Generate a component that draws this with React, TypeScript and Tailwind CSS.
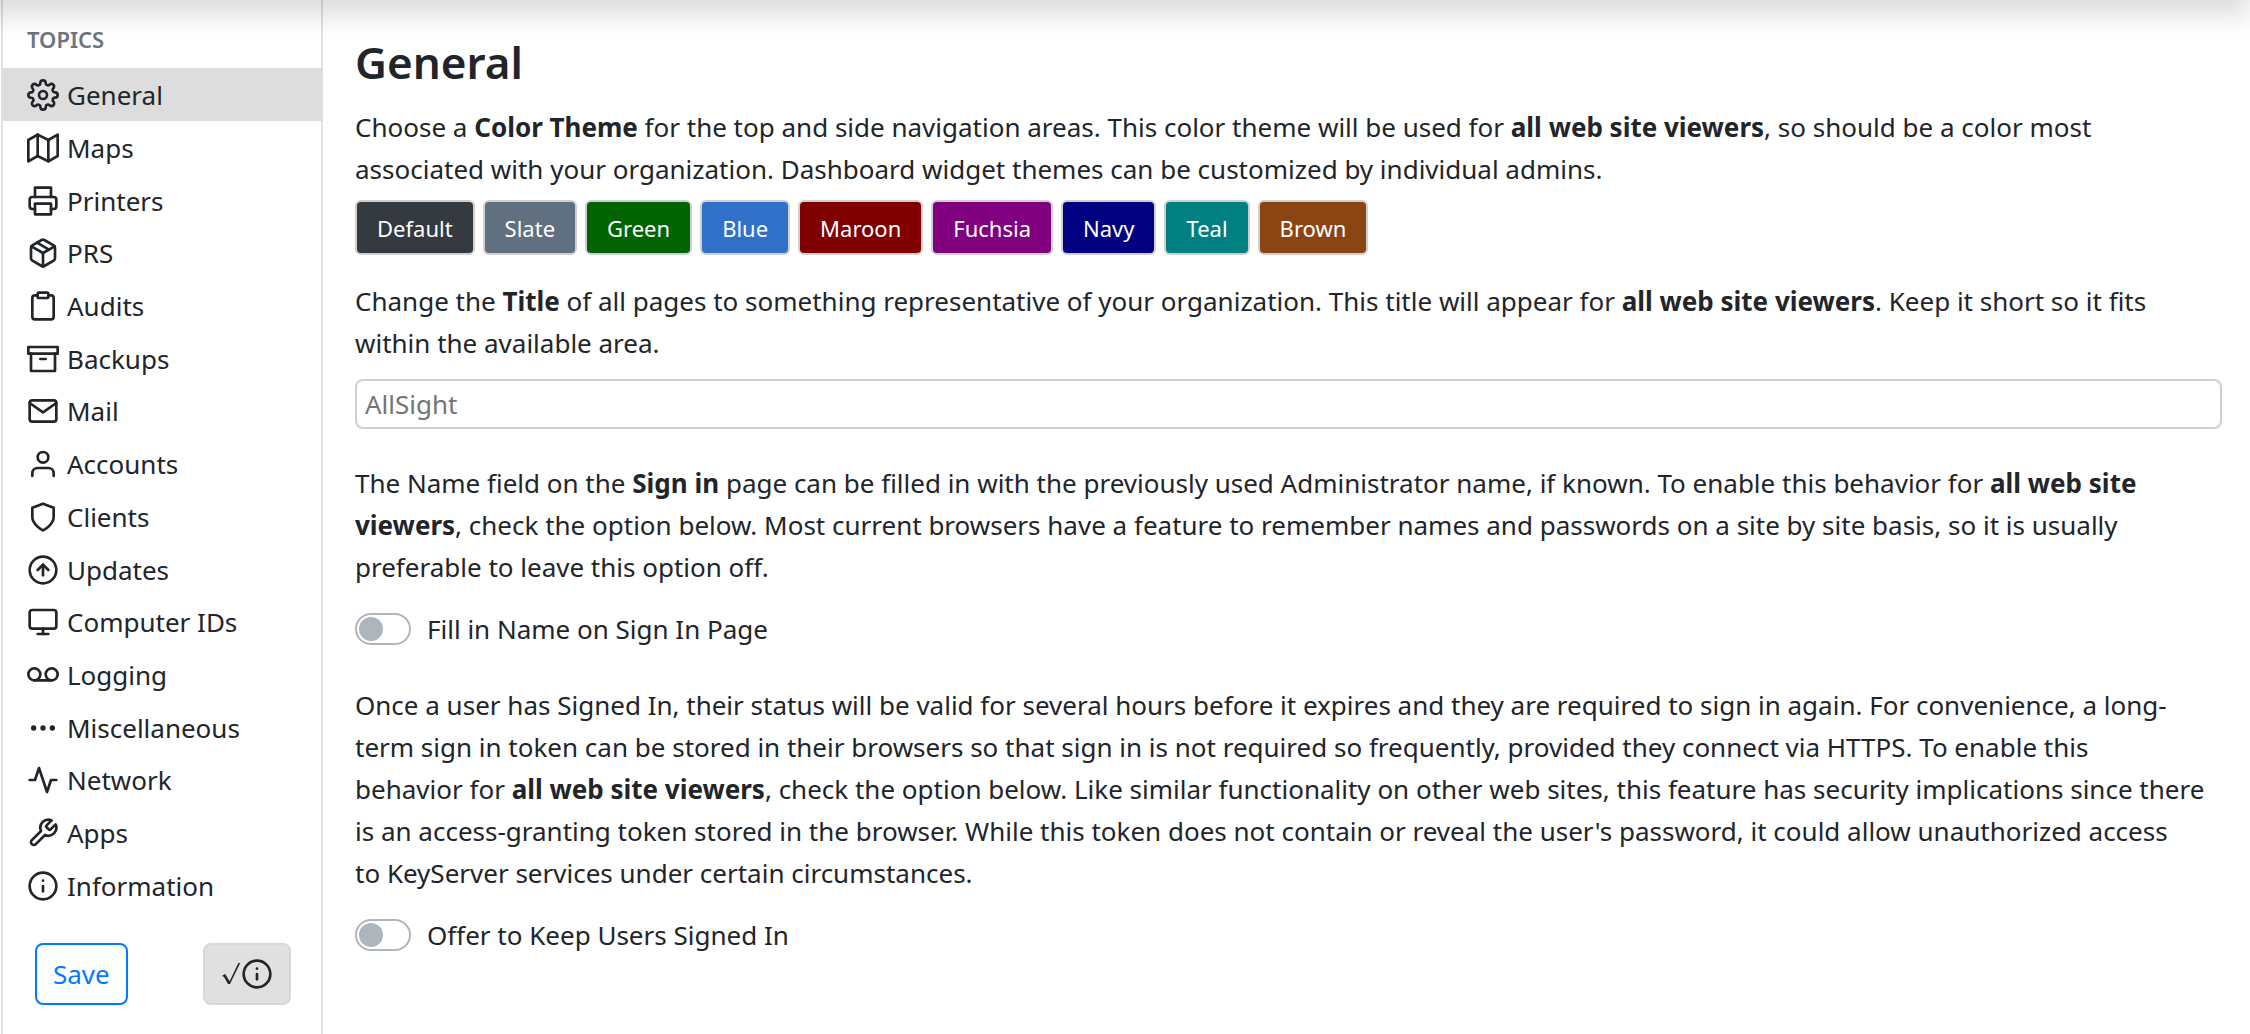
import { useState } from "react";
import type { ReactNode } from "react";
import type { IconType } from "react-icons";
import {
  FiActivity,
  FiArchive,
  FiArrowUpCircle,
  FiClipboard,
  FiInfo,
  FiMail,
  FiMap,
  FiMonitor,
  FiMoreHorizontal,
  FiPackage,
  FiPrinter,
  FiSettings,
  FiShield,
  FiTool,
  FiUser,
  FiVoicemail,
} from "react-icons/fi";
import clsx from "clsx";

const topics: { label: string; icon: IconType }[] = [
  { label: "General", icon: FiSettings },
  { label: "Maps", icon: FiMap },
  { label: "Printers", icon: FiPrinter },
  { label: "PRS", icon: FiPackage },
  { label: "Audits", icon: FiClipboard },
  { label: "Backups", icon: FiArchive },
  { label: "Mail", icon: FiMail },
  { label: "Accounts", icon: FiUser },
  { label: "Clients", icon: FiShield },
  { label: "Updates", icon: FiArrowUpCircle },
  { label: "Computer IDs", icon: FiMonitor },
  { label: "Logging", icon: FiVoicemail },
  { label: "Miscellaneous", icon: FiMoreHorizontal },
  { label: "Network", icon: FiActivity },
  { label: "Apps", icon: FiTool },
  { label: "Information", icon: FiInfo },
];

const themes = [
  { label: "Default", color: "bg-[#343a40]" },
  { label: "Slate", color: "bg-[#607080]" },
  { label: "Green", color: "bg-[#006400]" },
  { label: "Blue", color: "bg-[#3070c8]" },
  { label: "Maroon", color: "bg-[#800000]" },
  { label: "Fuchsia", color: "bg-[#800080]" },
  { label: "Navy", color: "bg-[#000080]" },
  { label: "Teal", color: "bg-[#008080]" },
  { label: "Brown", color: "bg-[#8b4513]" },
];

export default function App() {
  const [topic, setTopic] = useState("General");

  return (
    <div className="relative flex min-h-screen overflow-hidden bg-white pl-px font-['Noto_Sans','Open_Sans',sans-serif] text-[26px] leading-[42px] text-[#212529]">
      {/* shadow cast by the top bar */}
      <div className="pointer-events-none absolute -top-16 right-0 -left-8 z-10 h-16 shadow-[0_14px_28px_rgba(0,0,0,0.15)]" />

      <aside className="flex w-[322px] shrink-0 flex-col border-l-2 border-[#dee2e6]">
        <h6 className="flex h-[68px] items-center border-r-2 border-[#dee2e6] pt-2.5 pl-6 text-[22px] font-semibold text-[#6c757d]">
          TOPICS
        </h6>
        <nav className="grid h-[843px] auto-rows-fr">
          {topics.map(({ label, icon: Icon }) => (
            <a
              key={label}
              href="#"
              onClick={() => setTopic(label)}
              className={clsx(
                "flex items-center gap-2 border-r-2 pt-0.5 pl-6",
                topic === label
                  ? "border-[#dddddd] bg-[#dddddd]"
                  : "border-[#dee2e6]",
              )}
            >
              <Icon size={32} />
              {label}
            </a>
          ))}
        </nav>
        <div className="flex grow items-start justify-between border-r-2 border-[#dee2e6] pt-8 pr-[30px] pl-8">
          <button className="rounded-lg border-2 border-[#007bff] px-4 py-2 text-[#007bff]">
            Save
          </button>
          <button
            aria-label="Check information"
            className="flex h-[62px] items-center rounded-lg border-2 border-[#d8d8d8] bg-[#e0e0e0] px-4"
          >
            <CheckMark />
            <FiInfo size={32} />
          </button>
        </div>
      </aside>

      <main className="min-w-0 grow pt-8 pr-7 pl-8">
        <h1 className="text-[44px] leading-[60px] font-semibold">General</h1>

        <p className="mt-3.5">
          Choose a <b>Color Theme</b> for the top and side navigation areas.
          This color theme will be used for <b>all web site viewers</b>, so
          should be a color most associated with your organization. Dashboard
          widget themes can be customized by individual admins.
        </p>
        <div className="mt-2.5 flex gap-2">
          {themes.map(({ label, color }) => (
            <button
              key={label}
              className={clsx(
                "h-[55px] rounded-md border-2 border-[#d0d0d0] px-5 text-[22px] text-white",
                color,
              )}
            >
              {label}
            </button>
          ))}
        </div>

        <p className="mt-[25px]">
          Change the <b>Title</b> of all pages to something representative of
          your organization. This title will appear for{" "}
          <b>all web site viewers</b>. Keep it short so it fits within the
          available area.
        </p>
        <input
          type="text"
          aria-label="Title"
          placeholder="AllSight"
          className="mt-[15px] block h-[50px] w-full rounded-lg border-2 border-[#d0d0d0] px-2 placeholder:text-[#757575]"
        />

        <p className="mt-[33px]">
          The Name field on the <b>Sign in</b> page can be filled in with the
          previously used Administrator name, if known. To enable this behavior
          for <b>all web site viewers</b>, check the option below. Most current
          browsers have a feature to remember names and passwords on a site by
          site basis, so it is usually preferable to leave this option off.
        </p>
        <Switch>Fill in Name on Sign In Page</Switch>

        <p className="mt-[34px]">
          Once a user has Signed In, their status will be valid for several
          hours before it expires and they are required to sign in again. For
          convenience, a long-term sign in token can be stored in their browsers
          so that sign in is not required so frequently, provided they connect
          via HTTPS. To enable this <br />
          behavior for <b>all web site viewers</b>, check the option below. Like
          similar functionality on other web sites, this feature has security
          implications since there is an access-granting token stored in the
          browser. While this token does not contain or reveal the user's
          password, it could allow unauthorized access <br />
          to KeyServer services under certain circumstances.
        </p>
        <Switch>Offer to Keep Users Signed In</Switch>
      </main>
    </div>
  );
}

function CheckMark() {
  return (
    <svg width="20" height="24" viewBox="0 0 20 24" fill="currentColor">
      <path d="M1.5 13.5 4.2 12 8.6 19.2 17.4 1H19.2L9 22H7L2.8 14.6 2 15Z" />
    </svg>
  );
}

function Switch({ children }: { children: ReactNode }) {
  return (
    <label className="mt-5 flex w-fit items-center gap-4">
      <input
        type="checkbox"
        role="switch"
        className="h-8 w-14 appearance-none rounded-full border-2 border-[#adb5bd] p-0.5 before:block before:size-6 before:rounded-full before:bg-[#adb5bd] checked:border-[#007bff] checked:bg-[#007bff] checked:before:translate-x-6 checked:before:bg-white"
      />
      {children}
    </label>
  );
}
